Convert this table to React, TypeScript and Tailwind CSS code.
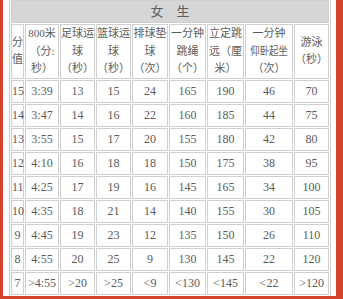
const rows: string[][] = [
  ['15', '3:39', '13', '15', '24', '165', '190', '46', '70'],
  ['14', '3:47', '14', '16', '22', '160', '185', '44', '75'],
  ['13', '3:55', '15', '17', '20', '155', '180', '42', '80'],
  ['12', '4:10', '16', '18', '18', '150', '175', '38', '95'],
  ['11', '4:25', '17', '19', '16', '145', '165', '34', '100'],
  ['10', '4:35', '18', '21', '14', '140', '155', '30', '105'],
  ['9', '4:45', '19', '23', '12', '135', '150', '26', '110'],
  ['8', '4:55', '20', '25', '9', '130', '145', '22', '120'],
  ['7', '>4:55', '>20', '>25', '<9', '<130', '<145', '<22', '>120'],
]

// column widths measured off the reference (cell box incl. border)
const widths = [13, 34, 35, 35, 36, 37, 37, 48, 35]

const headers: React.ReactNode[] = [
  <>分<br />值</>,
  <>800米<br />（分:<br />秒）</>,
  <>足球运<br />球<br />（秒）</>,
  <>篮球运<br />球<br />（秒）</>,
  <>排球垫<br />球<br />（次）</>,
  <>一分钟<br />跳绳<br />（个）</>,
  <>立定跳<br />远（厘<br />米）</>,
  <>一分钟<br /><span className="inline-block scale-x-85">仰卧起坐</span><br />（次）</>,
  <>游泳<br />（秒）</>,
]

export default function App() {
  return (
    <div
      className="h-[299px] w-[343px] overflow-hidden bg-white border-l-[3px] border-r-[7px] border-b-[3px] border-[#d4432b] text-[#5c5c5c]"
      style={{ fontFamily: '"Liberation Serif", "Noto Sans CJK SC", serif' }}
    >
      <table className="-mt-[2px] ml-[6px] w-[322px] table-fixed border-separate border-spacing-[1px] border border-[#d0d0d0]">
        <colgroup>
          {widths.map((w, i) => (
            <col key={i} style={{ width: w }} />
          ))}
        </colgroup>
        <tbody>
          <tr>
            <td colSpan={9} className="h-[23px] p-0 border border-[#d0d0d0] bg-[#d6d6d6] text-center text-[13px] leading-none">
              女　生
            </td>
          </tr>
          <tr>
            {headers.map((h, i) => (
              <td key={i} className="h-[54px] p-0 border border-[#d0d0d0] text-center align-middle text-[11px] leading-[17.5px] whitespace-nowrap">
                {h}
              </td>
            ))}
          </tr>
          {rows.map((r) => (
            <tr key={r[0]}>
              {r.map((v, i) => (
                <td key={i} className="h-[23px] p-0 border border-[#d0d0d0] text-center align-middle text-[12px] leading-none whitespace-nowrap">
                  {v}
                </td>
              ))}
            </tr>
          ))}
        </tbody>
      </table>
    </div>
  )
}
